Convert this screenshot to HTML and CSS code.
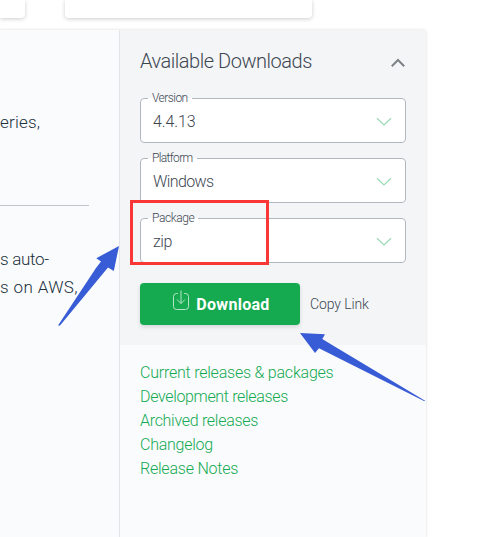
FILE: index.html
```html
<!DOCTYPE html>
<html lang="en">
<head>
<meta charset="utf-8">
<title>Available Downloads</title>
<link rel="stylesheet" href="styles.css">
</head>
<body>
<div class="page">
  <div class="cards">
    <div class="card card-first"></div>
    <div class="card card-second"></div>
  </div>
  <div class="panel">
    <main class="copy">
      <p class="line"><span class="t-eries">eries,</span></p>
      <hr class="rule">
      <p class="line"><span class="t-auto">s auto-</span><br><span class="t-aws">s on AWS,</span></p>
    </main>
    <aside class="sidebar">
      <section class="downloads">
        <header class="head">
          <h2 class="title">Available Downloads</h2>
          <svg class="collapse" width="16" height="10" viewBox="0 0 16 10"><path d="M1.8 8.3 8 2l6.200 6.300"/></svg>
        </header>
        <fieldset class="select">
          <legend class="l-version">Version</legend>
          <span class="v-version">4.4.13</span>
          <svg class="chevron" width="16" height="10" viewBox="0 0 16 10"><path d="M1 1.300 8 8l7-6.700"/></svg>
        </fieldset>
        <fieldset class="select">
          <legend class="l-platform">Platform</legend>
          <span class="v-platform">Windows</span>
          <svg class="chevron" width="16" height="10" viewBox="0 0 16 10"><path d="M1 1.300 8 8l7-6.700"/></svg>
        </fieldset>
        <fieldset class="select">
          <legend class="l-package">Package</legend>
          <span class="v-package">zip</span>
          <svg class="chevron" width="16" height="10" viewBox="0 0 16 10"><path d="M1 1.300 8 8l7-6.700"/></svg>
        </fieldset>
        <div class="actions">
          <button class="download" type="button">
            <svg class="icon" width="18" height="22" viewBox="0 0 18 22"><path d="M6 3.500H4.500Q1.500 3.500 1.500 6.500V16.500Q1.500 19.500 4.500 19.500H13.500Q16.500 19.500 16.500 16.500V6.500Q16.500 3.500 13.500 3.500H12M9 .5V13.500M5 9.500l4 4 4-4"/></svg>
            <span class="label">Download</span>
          </button>
          <a class="copylink">Copy Link</a>
        </div>
      </section>
      <nav class="links">
        <a class="k1">Current releases &amp; packages</a>
        <a class="k2">Development releases</a>
        <a class="k3">Archived releases</a>
        <a class="k4">Changelog</a>
        <a class="k5">Release Notes</a>
      </nav>
    </aside>
  </div>
  <div class="highlight"></div>
  <svg class="arrows" width="480" height="537" viewBox="0 0 480 537">
    <path d="M119 246 96.300 258.200 101 261.500 96 268 58 325.500 60 325.500 108 267.500 113.800 271Z"/>
    <path d="M300 333 325 334.300 322.300 339 328 342.500 425.500 401 424 401 319 348.200 315 353Z"/>
  </svg>
</div>
</body>
</html>
```
FILE: styles.css
```css
* { box-sizing: border-box; }

body {
  margin: 0;
  background: #fff;
  color: #3d4752;
  font: 300 16px/24px Roboto, "Liberation Sans", sans-serif;
}

.page {
  position: relative;
  width: 480px;
  height: 537px;
  overflow: hidden;
}

.cards { display: flex; gap: 40px; height: 30px; }
.card {
  height: 18px;
  background: #fff;
  border-radius: 0 0 4px 4px;
  box-shadow: 0 1px 4px rgba(0, 0, 0, .2);
}
.card-first { width: 25px; border-bottom-left-radius: 0; }
.card-second { width: 247px; }

.panel {
  display: flex;
  width: 426px;
  height: 507px;
  background: #fafbfd;
  border-top-right-radius: 4px;
  box-shadow: 0 0 3px rgba(0, 0, 0, .16);
}

.copy { width: 119px; padding-top: 78px; color: #21313c; font-size: 17px; }
.line { margin: 0; line-height: 28px; white-space: nowrap; }
.t-eries { letter-spacing: .2px; }
.t-auto { letter-spacing: -.3px; }
.t-aws { letter-spacing: .4px; }
.rule {
  width: 89px;
  height: 1px;
  margin: 69px 0 39px;
  border: 0;
  background: #c3c6c9;
}

.sidebar { width: 307px; border-left: 1px solid #e3e5e8; }
.downloads {
  height: 315px;
  padding: 18px 20px 0;
  background: #f4f5f7;
  border-top-right-radius: 4px;
}
.head { display: flex; align-items: center; justify-content: space-between; height: 26px; }
.title {
  margin: 0;
  font-size: 20px;
  font-weight: 300;
  line-height: 26px;
  letter-spacing: -.47px;
}
.collapse { margin: 4px 0 0; fill: none; stroke: #7d8389; stroke-width: 2; }

.select {
  display: flex;
  justify-content: space-between;
  align-items: center;
  width: 266px;
  height: 51px;
  margin: 0 0 9px;
  padding: 0 13px 3px 12px;
  border: 1px solid #b0b7be;
  border-radius: 4px;
  background: #fff;
}
.head + .select { margin-top: 18px; }
.select legend { margin-left: -5px; padding: 0 4px; font-size: 12px; line-height: 13px; }
.l-version { letter-spacing: -.55px; }
.l-platform { letter-spacing: -.65px; }
.l-package { letter-spacing: -.4px; }
.v-version { letter-spacing: -.1px; }
.v-platform { letter-spacing: -.6px; }
.v-package { letter-spacing: -.5px; }
.chevron { margin-bottom: 1px; fill: none; stroke: #9cdab7; stroke-width: 1.2; }

.actions { display: flex; align-items: center; gap: 10px; margin-top: 20px; }
.download {
  display: flex;
  align-items: center;
  justify-content: center;
  gap: 6px;
  width: 160px;
  height: 42px;
  padding: 0 0 0 2px;
  border: 0;
  border-radius: 4px;
  background: #16aa50;
  box-shadow: 0 2px 4px rgba(0, 0, 0, .13);
  color: #fff;
  font: 700 16px/24px Roboto, "Liberation Sans", sans-serif;
}
.label { margin-top: 2px; letter-spacing: .3px; }
.icon { margin-top: -6px; fill: none; stroke: #b5e4c8; stroke-width: 1; }
.copylink { font-size: 14px; letter-spacing: -.1px; }

.links { display: flex; flex-direction: column; padding: 16px 20px; color: #13aa52; }
.k1 { letter-spacing: -.22px; }
.k2 { letter-spacing: -.34px; }
.k3 { letter-spacing: -.29px; }
.k4 { letter-spacing: -.25px; }
.k5 { letter-spacing: -.22px; }

.highlight {
  position: absolute;
  left: 130px;
  top: 200px;
  width: 139px;
  height: 65px;
  border: 3px solid #fa3737;
}
.arrows { position: absolute; left: 0; top: 0; fill: #385bd6; }
```
